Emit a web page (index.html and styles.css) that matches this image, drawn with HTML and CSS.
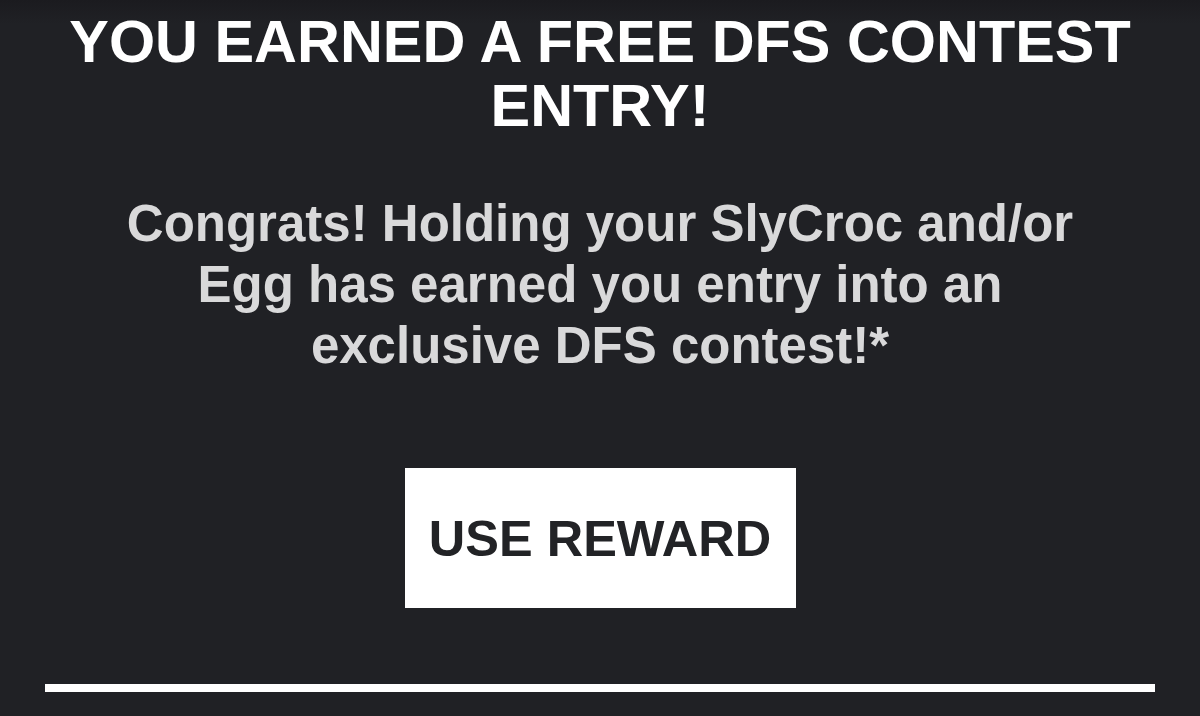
FILE: index.html
```html
<!DOCTYPE html>
<html lang="en">
  <head>
    <meta charset="UTF-8" />
    <meta name="viewport" content="width=device-width, initial-scale=1.0" />
    <title>Reward Unlocked</title>
    <link rel="stylesheet" href="styles.css">
  </head>
  <body>
    <div class="reward">
      <h1 class="reward-title">YOU EARNED A FREE DFS CONTEST ENTRY!</h1>
      <p class="reward-text">
        Congrats! Holding your SlyCroc and/or<br />
        Egg has earned you entry into an<br />
        exclusive DFS contest!*
      </p>
      <button class="reward-button" type="button">USE REWARD</button>
      <div class="reward-divider"></div>
    </div>
  </body>
</html>
```

FILE: styles.css
```css
* {
  box-sizing: border-box;
  margin: 0;
  padding: 0;
  border: 0;
}

body {
  font-family: "Liberation Sans", Arial, sans-serif;
  background: linear-gradient(#1b1b1f, #202125 24px) #202125;
  color: #ffffff;
  min-height: 100vh;
}

.reward {
  display: flex;
  flex-direction: column;
  align-items: center;
  padding: 10px 45px 0;
  text-align: center;
}

.reward-title {
  font-size: 59.4px;
  font-weight: 700;
  line-height: 64px;
  color: #ffffff;
}

.reward-text {
  margin-top: 55px;
  font-size: 51px;
  font-weight: 700;
  line-height: 61px;
  color: #d9d9da;
}

.reward-button {
  margin-top: 92px;
  width: 391px;
  height: 140px;
  background-color: #ffffff;
  color: #222326;
  font-family: inherit;
  font-size: 50.5px;
  font-weight: 700;
  cursor: pointer;
}

.reward-divider {
  margin-top: 76px;
  width: 100%;
  height: 8px;
  background-color: #ffffff;
}
```
